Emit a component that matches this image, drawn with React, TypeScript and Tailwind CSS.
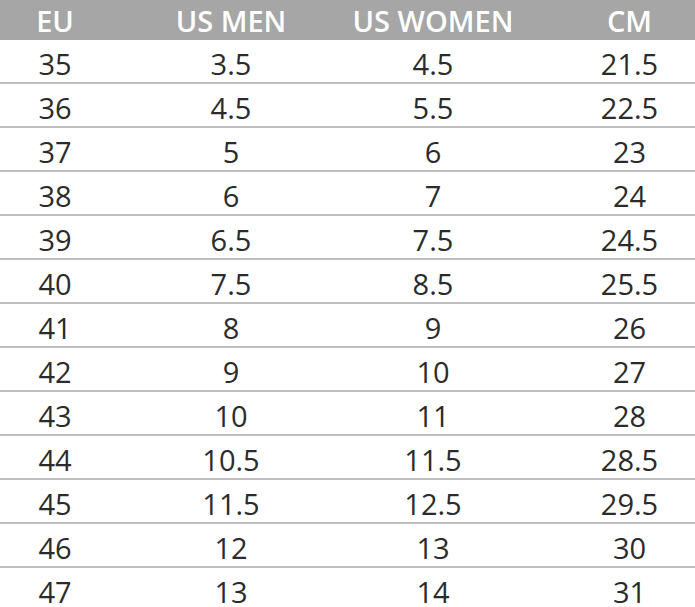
const rows: [string, string, string, string][] = [
  ["35", "3.5", "4.5", "21.5"],
  ["36", "4.5", "5.5", "22.5"],
  ["37", "5", "6", "23"],
  ["38", "6", "7", "24"],
  ["39", "6.5", "7.5", "24.5"],
  ["40", "7.5", "8.5", "25.5"],
  ["41", "8", "9", "26"],
  ["42", "9", "10", "27"],
  ["43", "10", "11", "28"],
  ["44", "10.5", "11.5", "28.5"],
  ["45", "11.5", "12.5", "29.5"],
  ["46", "12", "13", "30"],
  ["47", "13", "14", "31"],
];

const cols = "grid grid-cols-[110px_242px_162px_1fr]";

export default function App() {
  return (
    <div
      className="w-[695px] h-[607px] overflow-hidden bg-white"
      style={{ fontFamily: '"Open Sans", "Noto Sans", sans-serif' }}
    >
      <div className={`${cols} h-[40px] items-center bg-[#a6a6a6] text-[29px] leading-none font-semibold text-white`}>
        <div className="text-center">EU</div>
        <div className="text-center">US MEN</div>
        <div className="text-center">US WOMEN</div>
        <div className="pl-[50px] text-center">CM</div>
      </div>
      {rows.map((r) => (
        <div
          key={r[0]}
          className={`${cols} h-[44px] items-center border-b-2 border-[#c0c0c0] pt-[4px] text-[29px] leading-none text-[#2b2b2b]`}
        >
          <div className="text-center">{r[0]}</div>
          <div className="text-center">{r[1]}</div>
          <div className="text-center">{r[2]}</div>
          <div className="pl-[50px] text-center">{r[3]}</div>
        </div>
      ))}
    </div>
  );
}
